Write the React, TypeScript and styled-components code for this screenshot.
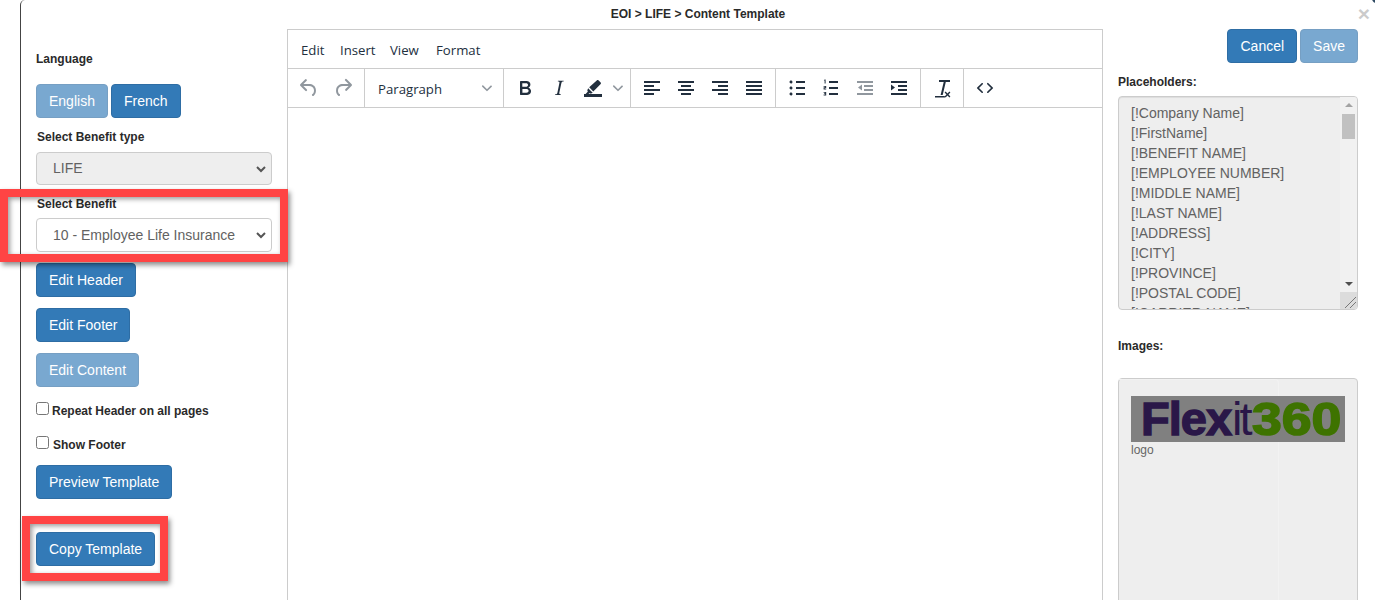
import React from "react";
import styled, { createGlobalStyle } from "styled-components";

const Global = createGlobalStyle`
  html, body { margin: 0; padding: 0; background: #fff; height: 600px; overflow: hidden; }
  #root { height: 600px; overflow: hidden; }
  * { box-sizing: border-box; }
`;

const Page = styled.div`
  position: relative;
  width: 1375px;
  height: 600px;
  overflow: hidden;
  padding-left: 20px;
  background: #fff;
  font-family: "Liberation Sans", Arial, sans-serif;
  color: #333;
`;

const Modal = styled.div`
  position: relative;
  height: 640px;
  border-left: 1px solid #444;
  border-top-left-radius: 5px;
`;

const CornerMark = styled.span`
  position: absolute;
  top: -6px;
  right: -6px;
  width: 9px;
  height: 9px;
  background: #2f4a63;
  border-radius: 50%;
`;

const Header = styled.header`
  height: 29px;
  display: flex;
  align-items: center;
  justify-content: center;
  padding-bottom: 1px;
  font-size: 12px;
  font-weight: 700;
  color: #2a2a2a;
`;

const Close = styled.span`
  position: absolute;
  top: 3px;
  right: 5px;
  font-size: 21px;
  line-height: 21px;
  font-weight: 700;
  color: #000;
  opacity: 0.2;
`;

const Body = styled.div`
  display: flex;
  align-items: flex-start;
  padding-left: 15px;
  padding-right: 17px;
`;

const LeftColumn = styled.aside`
  width: 236px;
  flex: none;
  display: flex;
  flex-direction: column;
  align-items: flex-start;
`;

const Label = styled.label<{ $top: number; $left?: number }>`
  display: block;
  margin-top: ${(p) => p.$top}px;
  margin-left: ${(p) => p.$left ?? 0}px;
  font-size: 12px;
  line-height: 14px;
  font-weight: 700;
  color: #2a2a2a;
`;

const Btn = styled.button<{ $top?: number; $off?: boolean }>`
  height: 34px;
  margin-top: ${(p) => p.$top ?? 0}px;
  padding: 0 12px;
  border: 1px solid #2e6da4;
  border-radius: 4px;
  background: #337ab7;
  color: #fff;
  font: 14px/20px "Liberation Sans", Arial, sans-serif;
  white-space: nowrap;
  opacity: ${(p) => (p.$off ? 0.65 : 1)};
`;

const BtnRow = styled.div<{ $top: number; $gap: number }>`
  display: flex;
  gap: ${(p) => p.$gap}px;
  margin-top: ${(p) => p.$top}px;
`;

const SelectWrap = styled.div<{ $top: number; $h: number; $off?: boolean }>`
  position: relative;
  width: 236px;
  height: ${(p) => p.$h}px;
  margin-top: ${(p) => p.$top}px;
  display: flex;
  align-items: center;
  padding-left: 16px;
  padding-bottom: ${(p) => (p.$off ? 2 : 0)}px;
  border: 1px solid #ccc;
  border-radius: 4px;
  background: ${(p) => (p.$off ? "#eee" : "#fff")};
  color: #626262;
  font-size: 14px;
  svg {
    position: absolute;
    right: 5px;
    top: 50%;
    margin-top: -5px;
  }
`;

const CheckRow = styled.div<{ $top: number; $gap: number }>`
  display: flex;
  align-items: flex-start;
  gap: ${(p) => p.$gap}px;
  margin-top: ${(p) => p.$top}px;
  font-size: 12px;
  font-weight: 700;
  line-height: 14px;
  color: #2a2a2a;
  span { margin-top: 2px; }
`;

const CheckBox = styled.i`
  display: block;
  width: 13px;
  height: 13px;
  border: 1px solid #767676;
  border-radius: 2.5px;
  background: #fff;
`;

const Editor = styled.section`
  width: 816px;
  flex: none;
  height: 620px;
  margin-left: 15px;
  border: 1px solid #ccc;
  background: #fff;
`;

const MenuBar = styled.nav`
  height: 39px;
  display: flex;
  align-items: center;
  padding-left: 13px;
  padding-top: 2px;
  border-bottom: 1px solid #ccc;
  font-family: "Open Sans", sans-serif;
  font-size: 13.2px;
  color: #222f3e;
`;

const MenuItem = styled.span<{ $w: number }>`
  width: ${(p) => p.$w}px;
  flex: none;
`;

const ToolBar = styled.div`
  height: 39px;
  display: flex;
  border-bottom: 1px solid #ccc;
  color: #222f3e;
`;

const Group = styled.div<{ $last?: boolean }>`
  height: 38px;
  display: flex;
  align-items: center;
  padding: 0 4px;
  flex: none;
  border-right: ${(p) => (p.$last ? "none" : "1px solid #ccc")};
`;

const Tool = styled.span<{ $off?: boolean; $w?: number }>`
  width: ${(p) => p.$w ?? 34}px;
  height: 24px;
  flex: none;
  display: flex;
  align-items: center;
  justify-content: center;
  color: ${(p) => (p.$off ? "rgba(34,47,62,.5)" : "#222f3e")};
  svg { display: block; fill: currentColor; }
`;

const FormatSelect = styled.div`
  width: 130px;
  height: 24px;
  display: flex;
  align-items: center;
  justify-content: space-between;
  padding: 2px 6px 0 9px;
  font-family: "Open Sans", sans-serif;
  font-size: 13.2px;
  color: #222f3e;
  svg { display: block; fill: rgba(34,47,62,.5); margin-top: -2px; }
`;

const RightColumn = styled.aside`
  width: 240px;
  flex: none;
  margin-left: 15px;
  display: flex;
  flex-direction: column;
`;

const Actions = styled.div`
  display: flex;
  justify-content: flex-end;
  gap: 3px;
`;

const Placeholders = styled.div`
  display: flex;
  height: 214px;
  margin-top: 7px;
  border: 1px solid #ccc;
  border-radius: 4px;
  background: #eee;
  overflow: hidden;
  box-shadow: inset 0 1px 1px rgba(0, 0, 0, 0.075);
`;

const PlaceholderList = styled.div`
  flex: 1;
  padding: 6px 12px;
  overflow: hidden;
  font-size: 14px;
  line-height: 20px;
  color: #626262;
`;

const ScrollBar = styled.div`
  width: 17px;
  flex: none;
  display: flex;
  flex-direction: column;
  align-items: center;
  background: #f1f1f1;
`;

const Arrow = styled.i<{ $down?: boolean }>`
  display: block;
  width: 0;
  height: 0;
  margin-top: ${(p) => (p.$down ? "auto" : "6px")};
  margin-bottom: ${(p) => (p.$down ? "6px" : "0")};
  border-left: 4px solid transparent;
  border-right: 4px solid transparent;
  ${(p) =>
    p.$down ? "border-top: 4px solid #505050;" : "border-bottom: 4px solid #a3a3a3;"}
`;

const Thumb = styled.i`
  display: block;
  width: 13px;
  height: 25px;
  margin-top: 7px;
  background: #c1c1c1;
`;

const Grip = styled.div`
  width: 17px;
  height: 17px;
  background: #dcdcdc;
  display: flex;
  svg { display: block; }
`;

const ImagesBox = styled.div`
  height: 260px;
  margin-top: 25px;
  border: 1px solid #ccc;
  border-radius: 4px;
  background: #eee;
`;

const ImageTile = styled.figure`
  width: 160px;
  height: 100%;
  margin: 0;
  padding: 16px 12px;
  border-top: 1px solid #f2f2f2;
  border-right: 1px solid #f2f2f2;
  border-top-right-radius: 4px;
`;

const Logo = styled.div`
  width: 214px;
  height: 46px;
  padding-left: 10px;
  background: #808080;
  white-space: nowrap;
  font: 700 47px/46px "Liberation Sans", Arial, sans-serif;
  color: #2a1748;
  display: flex;
`;

const LogoHeavy = styled.span`
  letter-spacing: -1px;
  -webkit-text-stroke: 1.4px #2a1748;
`;

const LogoThin = styled.span`
  font-weight: 400;
  letter-spacing: -3px;
  margin-left: 1px;
`;

const LogoGreen = styled.span`
  display: inline-block;
  color: #3e7300;
  margin-left: 2px;
  transform: scaleX(1.14);
  transform-origin: left center;
  -webkit-text-stroke: 1.6px #3e7300;
`;

const LogoCaption = styled.figcaption`
  font-size: 12px;
  line-height: 16px;
  color: #666;
`;

const Highlight = styled.div<{ $x: number; $y: number; $w: number; $h: number }>`
  position: absolute;
  left: ${(p) => p.$x}px;
  top: ${(p) => p.$y}px;
  width: ${(p) => p.$w}px;
  height: ${(p) => p.$h}px;
  border: 8px solid #ff4444;
  box-shadow: 2px 3px 5px rgba(0, 0, 0, 0.45), inset 2px 2px 5px rgba(0, 0, 0, 0.4);
  pointer-events: none;
`;

const Chevron = () => (
  <svg width="10" height="10" viewBox="0 0 10 10">
    <path d="M1 3l4 4 4-4" fill="none" stroke="#555" strokeWidth="2" />
  </svg>
);

const Icon = ({ d, size = 24 }: { d: string; size?: number }) => (
  <svg width={size} height={size} viewBox="0 0 24 24">
    <path d={d} fillRule="evenodd" />
  </svg>
);

const bar = (x: number, y: number, w: number, h = 2) => `M${x} ${y}h${w}v${h}h-${w}z`;
const dot = (y: number) =>
  `M4.5 ${y}c0-.4.1-.8.4-1 .3-.4.7-.5 1.1-.5s.8.1 1 .4c.4.3.5.7.5 1.1s-.1.8-.4 1c-.3.4-.7.5-1.1.5s-.8-.1-1-.4c-.4-.3-.5-.7-.5-1.1z`;

const I = {
  undo: "M6.4 8H12c3.7 0 6.2 2 6.8 5.1.6 2.7-.4 5.6-2.3 6.8a1 1 0 0 1-1-1.8c1.1-.6 1.8-2.7 1.4-4.6-.5-2.1-2.1-3.5-4.9-3.5H6.4l3.3 3.3a1 1 0 1 1-1.4 1.4l-5-5a1 1 0 0 1 0-1.4l5-5a1 1 0 0 1 1.4 1.4L6.4 8z",
  redo: "M17.6 10H12c-2.8 0-4.4 1.4-4.9 3.5-.4 2 .3 4 1.4 4.6a1 1 0 1 1-1 1.8c-2-1.2-2.9-4.1-2.3-6.8.6-3 3-5.1 6.8-5.1h5.6l-3.3-3.3a1 1 0 1 1 1.4-1.4l5 5a1 1 0 0 1 0 1.4l-5 5a1 1 0 0 1-1.4-1.4l3.3-3.3z",
  bold: "M7.8 19c-.3 0-.5 0-.6-.2l-.2-.5V5.7c0-.2 0-.4.2-.5l.6-.2h5c1.5 0 2.7.3 3.5 1 .7.6 1.1 1.4 1.1 2.5a3 3 0 0 1-.6 1.9c-.4.6-1 1-1.6 1.2.4.1.9.3 1.3.6s.8.7 1 1.2c.4.4.5 1 .5 1.6 0 1.3-.4 2.3-1.3 3-.8.7-2.1 1-3.8 1H7.8zm5-8.3c.6 0 1.2-.1 1.6-.5.4-.3.6-.7.6-1.3 0-1.1-.8-1.7-2.3-1.7H9.3v3.5h3.4zm.5 6c.7 0 1.3-.1 1.7-.4.4-.4.6-.9.6-1.5s-.2-1-.7-1.4c-.4-.3-1-.4-2-.4H9.4v3.8h4z",
  italic: "M16.7 4.7l-.1.9h-.3c-.6 0-1 0-1.4.3-.3.3-.4.6-.5 1.1l-2.1 9.8v.6c0 .5.4.8 1.4.8h.2l-.2.8H8l.2-.8h.2c1.1 0 1.8-.5 2-1.5l2-9.8.1-.5c0-.6-.4-.8-1.4-.8h-.3l.2-.9h5.8z",
  pen: "M3 18h18v3H3zM16 4.3c.4-.4 1-.4 1.4 0l2.3 2.3c.4.4.4 1 0 1.4l-7.4 7.4-4.1-4.1zM7.2 12.3l4.5 4.5-1.6.7H9l-.5-.5-1 1H4.6l2.3-2.4-.5-.5v-1.2z",
  left: bar(4, 5, 16) + bar(4, 9, 10) + bar(4, 13, 16) + bar(4, 17, 10),
  center: bar(4, 5, 16) + bar(7, 9, 10) + bar(4, 13, 16) + bar(7, 17, 10),
  right: bar(4, 5, 16) + bar(10, 9, 10) + bar(4, 13, 16) + bar(10, 17, 10),
  justify: bar(4, 5, 16) + bar(4, 9, 16) + bar(4, 13, 16) + bar(4, 17, 16),
  bullets: dot(6) + dot(12) + dot(18) + bar(11, 5, 9) + bar(11, 11, 9) + bar(11, 17, 9),
  numbers:
    bar(10, 5, 9) + bar(10, 11, 9) + bar(10, 17, 9) +
    "M5.6 3.6h1v3.8h-1V4.6h-.8zM4.6 9.9h2.6v2.1H5.6v.5h1.6v.9H4.6v-2.1h1.6v-.5H4.6zM4.6 15.9h2.6v3.5H4.6v-.9h1.6v-.4H5.1v-.8h1.1v-.5H4.6z",
  outdent: bar(4, 5, 16) + bar(11, 9, 9) + bar(11, 13, 9) + bar(4, 17, 16) + "M9 8.5v6L5 11.5z",
  indent: bar(4, 5, 16) + bar(11, 9, 9) + bar(11, 13, 9) + bar(4, 17, 16) + "M4 8.5v6l4-3z",
  clear:
    "M9 4h11v2h-4.2l-3.1 13h-2.1l3.1-13H9zM5 20h10v1.6H5zM15.6 15.6l1.9 1.9 1.9-1.9 1 1-1.9 1.9 1.9 1.9-1 1-1.9-1.9-1.9 1.9-1-1 1.9-1.9-1.9-1.9z",
  code: "M9.8 15.7c.3.3.3.8 0 1-.3.4-.9.4-1.2 0l-4.4-4.1a.8.8 0 0 1 0-1.2l4.4-4.2c.3-.3.9-.3 1.2 0 .3.3.3.8 0 1.1L6 12l3.8 3.7zm4.4 0c-.3.3-.3.8 0 1 .3.4.9.4 1.2 0l4.4-4.1a.8.8 0 0 0 0-1.2l-4.4-4.2a.8.8 0 0 0-1.2 0c-.3.3-.3.8 0 1.1L18 12l-3.8 3.7z",
};

const SmallChevron = () => (
  <svg width="12" height="12" viewBox="0 0 12 12">
    <path d="M1.2 3.6a.8.8 0 0 1 1.1 0L6 7.2l3.7-3.6a.8.8 0 0 1 1.1 1.1L6.6 8.8a.8.8 0 0 1-1.2 0L1.2 4.7a.8.8 0 0 1 0-1.1z" />
  </svg>
);

const placeholders = [
  "[!Company Name]",
  "[!FirstName]",
  "[!BENEFIT NAME]",
  "[!EMPLOYEE NUMBER]",
  "[!MIDDLE NAME]",
  "[!LAST NAME]",
  "[!ADDRESS]",
  "[!CITY]",
  "[!PROVINCE]",
  "[!POSTAL CODE]",
  "[!CARRIER NAME]",
];

export default function App() {
  return (
    <Page>
      <Global />
      <Modal>
        <CornerMark />
        <Header>EOI &gt; LIFE &gt; Content Template</Header>
        <Close>×</Close>
        <Body>
          <LeftColumn>
            <Label $top={23}>Language</Label>
            <BtnRow $top={18} $gap={3}>
              <Btn $off>English</Btn>
              <Btn>French</Btn>
            </BtnRow>
            <Label $top={12} $left={1}>Select Benefit type</Label>
            <SelectWrap $top={8} $h={33} $off>
              LIFE
              <Chevron />
            </SelectWrap>
            <Label $top={12} $left={1}>Select Benefit</Label>
            <SelectWrap $top={7} $h={34}>
              10 - Employee Life Insurance
              <Chevron />
            </SelectWrap>
            <Btn $top={11}>Edit Header</Btn>
            <Btn $top={11}>Edit Footer</Btn>
            <Btn $top={11} $off>
              Edit Content
            </Btn>
            <CheckRow $top={15} $gap={3}>
              <CheckBox />
              <span>Repeat Header on all pages</span>
            </CheckRow>
            <CheckRow $top={18} $gap={4}>
              <CheckBox />
              <span>Show Footer</span>
            </CheckRow>
            <Btn $top={13}>Preview Template</Btn>
            <Btn $top={33}>Copy Template</Btn>
          </LeftColumn>

          <Editor>
            <MenuBar>
              <MenuItem $w={39}>Edit</MenuItem>
              <MenuItem $w={50}>Insert</MenuItem>
              <MenuItem $w={46}>View</MenuItem>
              <MenuItem $w={50}>Format</MenuItem>
            </MenuBar>
            <ToolBar>
              <Group>
                <Tool $off><Icon d={I.undo} /></Tool>
                <Tool $off><Icon d={I.redo} /></Tool>
              </Group>
              <Group>
                <FormatSelect>
                  Paragraph
                  <SmallChevron />
                </FormatSelect>
              </Group>
              <Group>
                <Tool><Icon d={I.bold} /></Tool>
                <Tool><Icon d={I.italic} /></Tool>
                <Tool><Icon d={I.pen} /></Tool>
                <Tool $w={16} $off><SmallChevron /></Tool>
              </Group>
              <Group>
                <Tool><Icon d={I.left} /></Tool>
                <Tool><Icon d={I.center} /></Tool>
                <Tool><Icon d={I.right} /></Tool>
                <Tool><Icon d={I.justify} /></Tool>
              </Group>
              <Group>
                <Tool><Icon d={I.bullets} /></Tool>
                <Tool><Icon d={I.numbers} /></Tool>
                <Tool $off><Icon d={I.outdent} /></Tool>
                <Tool><Icon d={I.indent} /></Tool>
              </Group>
              <Group>
                <Tool><Icon d={I.clear} /></Tool>
              </Group>
              <Group $last>
                <Tool><Icon d={I.code} /></Tool>
              </Group>
            </ToolBar>
          </Editor>

          <RightColumn>
            <Actions>
              <Btn>Cancel</Btn>
              <Btn $off>Save</Btn>
            </Actions>
            <Label $top={12}>Placeholders:</Label>
            <Placeholders>
              <PlaceholderList>
                {placeholders.map((p) => (
                  <div key={p}>{p}</div>
                ))}
              </PlaceholderList>
              <ScrollBar>
                <Arrow />
                <Thumb />
                <Arrow $down />
                <Grip>
                  <svg width="17" height="17" viewBox="0 0 17 17">
                    <path d="M5 16L16 5M10 16l6-6" stroke="#777" strokeWidth="1" fill="none" />
                  </svg>
                </Grip>
              </ScrollBar>
            </Placeholders>
            <Label $top={29}>Images:</Label>
            <ImagesBox>
              <ImageTile>
                <Logo>
                  <LogoHeavy>Flex</LogoHeavy>
                  <LogoThin>it</LogoThin>
                  <LogoGreen>360</LogoGreen>
                </Logo>
                <LogoCaption>logo</LogoCaption>
              </ImageTile>
            </ImagesBox>
          </RightColumn>
        </Body>
      </Modal>
      <Highlight $x={0} $y={189} $w={288} $h={73} />
      <Highlight $x={22} $y={516} $w={146} $h={65} />
    </Page>
  );
}
